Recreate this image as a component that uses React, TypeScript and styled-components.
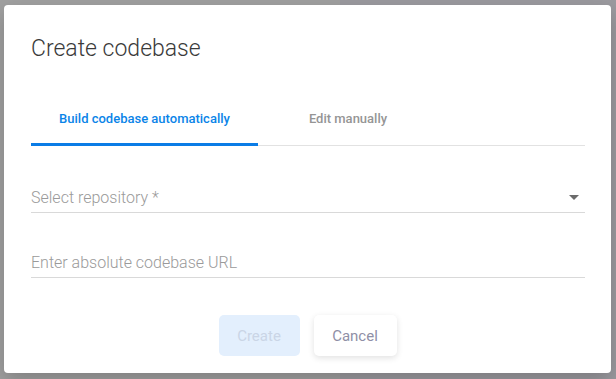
import { useState } from "react";
import styled, { createGlobalStyle } from "styled-components";

const GlobalStyle = createGlobalStyle`
  html, body {
    margin: 0;
    padding: 0;
    background: #9d9d9e;
    font-family: Roboto, "Liberation Sans", sans-serif;
  }
`;

const Backdrop = styled.div`
  width: 616px;
  height: 379px;
  box-sizing: border-box;
  padding: 5px 5px 6px 4px;
  background: linear-gradient(90deg, #a0a0a0 0, #a0a0a0 340px, #9b9a9f 340px);
  overflow: hidden;
`;

const Dialog = styled.div`
  width: 607px;
  height: 368px;
  box-sizing: border-box;
  background: #fff;
  border-radius: 4px;
  box-shadow: 0 8px 20px rgba(0, 0, 0, 0.2);
  padding: 30px 27px 0 27px;
  display: flex;
  flex-direction: column;
`;

const Title = styled.h2`
  margin: 0;
  font-size: 23px;
  line-height: 28px;
  font-weight: 300;
  color: #3a3a3a;
`;

const TabBar = styled.div`
  margin-top: 36px;
  width: 554px;
  display: flex;
  border-bottom: 1px solid #e2e2e2;
`;

const Tab = styled.button<{ $active?: boolean; $width: number }>`
  width: ${(p) => p.$width}px;
  height: 47px;
  padding: 0 0 5px;
  border: none;
  background: none;
  font-family: Roboto, "Liberation Sans", sans-serif;
  font-size: 13px;
  font-weight: 500;
  color: ${(p) => (p.$active ? "#0a84e8" : "#959595")};
  border-bottom: 3px solid ${(p) => (p.$active ? "#0a7ce6" : "transparent")};
  margin-bottom: -1px;
  cursor: pointer;
`;

const Field = styled.div<{ $top: number }>`
  margin-top: ${(p) => p.$top}px;
  width: 554px;
  height: 35px;
  box-sizing: border-box;
  border-bottom: 1px solid #d9d9d9;
  display: flex;
  align-items: flex-end;
  justify-content: space-between;
  padding-bottom: 5px;
`;

const Placeholder = styled.span`
  font-size: 16px;
  line-height: 19px;
  font-weight: 300;
  color: #9a9a9a;
`;

const Arrow = styled.span`
  width: 0;
  height: 0;
  margin: 0 6px 7px 0;
  border-left: 5px solid transparent;
  border-right: 5px solid transparent;
  border-top: 5px solid #6b6b6b;
`;

const Actions = styled.div`
  margin-top: 37px;
  display: flex;
  justify-content: center;
  gap: 14px;
`;

const Button = styled.button<{ $primary?: boolean }>`
  height: 41px;
  padding: 0;
  width: ${(p) => (p.$primary ? 81 : 83)}px;
  border: none;
  border-radius: 5px;
  font-family: Roboto, "Liberation Sans", sans-serif;
  font-size: 15px;
  font-weight: 400;
  background: ${(p) => (p.$primary ? "#e3effd" : "#fff")};
  color: ${(p) => (p.$primary ? "#cad5e6" : "#8f8fa6")};
  box-shadow: ${(p) =>
    p.$primary ? "none" : "0 2px 6px rgba(0, 0, 0, 0.12)"};
  cursor: pointer;
`;

export default function App() {
  const [tab, setTab] = useState(0);

  return (
    <>
      <GlobalStyle />
      <Backdrop>
        <Dialog>
          <Title>Create codebase</Title>
          <TabBar>
            <Tab $width={227} $active={tab === 0} onClick={() => setTab(0)}>
              Build codebase automatically
            </Tab>
            <Tab $width={180} $active={tab === 1} onClick={() => setTab(1)}>
              Edit manually
            </Tab>
          </TabBar>
          <Field $top={32}>
            <Placeholder>Select repository *</Placeholder>
            <Arrow />
          </Field>
          <Field $top={30}>
            <Placeholder>Enter absolute codebase URL</Placeholder>
          </Field>
          <Actions>
            <Button $primary disabled>
              Create
            </Button>
            <Button>Cancel</Button>
          </Actions>
        </Dialog>
      </Backdrop>
    </>
  );
}
